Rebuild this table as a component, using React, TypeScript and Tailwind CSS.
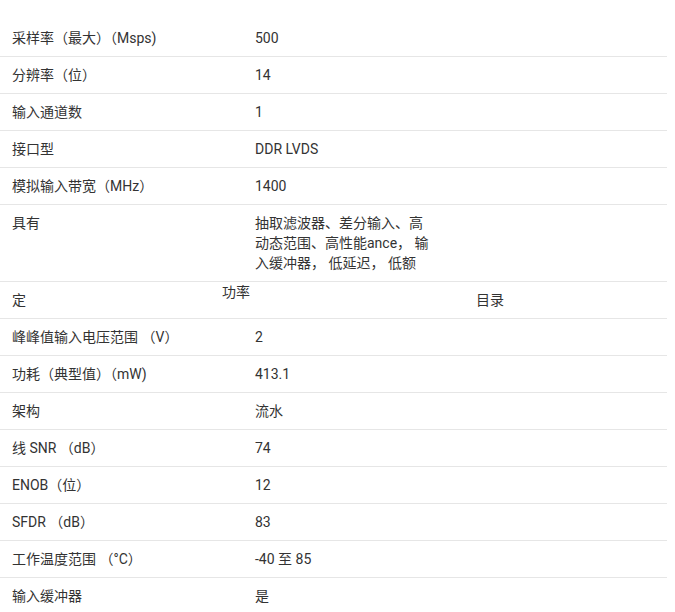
const specs: [string, string][] = [
  ['采样率（最大）（Msps)', '500'],
  ['分辨率（位）', '14'],
  ['输入通道数', '1'],
  ['接口型', 'DDR LVDS'],
  ['模拟输入带宽（MHz）', '1400'],
  ['具有', '抽取滤波器、差分输入、高动态范围、高性能ance， 输入缓冲器， 低延迟， 低额'],
]

const specsAfter: [string, string][] = [
  ['峰峰值输入电压范围 （V）', '2'],
  ['功耗（典型值）（mW)', '413.1'],
  ['架构', '流水'],
  ['线 SNR （dB）', '74'],
  ['ENOB（位）', '12'],
  ['SFDR （dB）', '83'],
  ['工作温度范围 （°C）', '-40 至 85'],
  ['输入缓冲器', '是'],
]

function SpecRow({ label, value }: { label: string; value: string }) {
  return (
    <div className="flex border-b border-[#e6e6e6]">
      <div className="w-[243px] shrink-0 px-3 py-2">{label}</div>
      <div className="w-[200px] px-3 py-2">{value}</div>
    </div>
  )
}

export default function App() {
  return (
    <div
      className="bg-white w-[675px] h-[612px] overflow-hidden pt-[20px] text-[14px] leading-5 text-[#333333]"
      style={{ fontFamily: 'Roboto, "Noto Sans CJK SC", sans-serif' }}
    >
      <div className="w-[667px]">
        {specs.map(([label, value]) => (
          <SpecRow key={label} label={label} value={value} />
        ))}

        {/* broken row */}
        <div className="flex border-b border-[#e6e6e6]">
          <div className="w-[222px] shrink-0 pl-3 py-2">定</div>
          <div className="w-[254px] shrink-0 self-start">功率</div>
          <div className="py-2">目录</div>
        </div>

        {specsAfter.map(([label, value]) => (
          <SpecRow key={label} label={label} value={value} />
        ))}
      </div>
    </div>
  )
}
